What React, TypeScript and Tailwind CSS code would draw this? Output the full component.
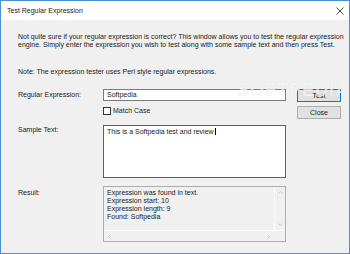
import { useState } from 'react'

const font = "font-['Liberation_Sans',Arial,sans-serif]"

export default function App() {
  const [matchCase, setMatchCase] = useState(false)

  return (
    <div className={`relative flex h-[254px] w-[350px] flex-col border border-[#4a8fd0] bg-[#f0f0f0] text-[7px] leading-[8px] text-[#1a1a1a] ${font}`}>
      {/* title bar */}
      <div className="flex h-[19px] shrink-0 items-center justify-between bg-white pl-[6px] pr-[4px]">
        <span className="text-[7px]">Test Regular Expression</span>
        <svg width="8" height="8" viewBox="0 0 8 8" className="mr-[1px]">
          <path d="M0.5 0.5 L7.5 7.5 M7.5 0.5 L0.5 7.5" stroke="#333" strokeWidth="0.9" />
        </svg>
      </div>

      <div className="flex flex-1 flex-col pl-[17px] pt-[13px]">
        <p className="whitespace-nowrap">
          Not quite sure if your regular expression is correct? This window allows you to test the regular expression
          <br />
          engine. Simply enter the expression you wish to test along with some sample text and then press Test.
        </p>
        <p className="mt-[19px] whitespace-nowrap">Note: The expression tester uses Perl style regular expressions.</p>

        <div className="mt-[13px] flex">
          <div className="flex w-[268px] flex-col">
            <div className="flex">
              <div className="w-[85px] pt-[2px]">Regular Expression:</div>
              <div className="flex h-[12px] w-[183px] items-center border border-[#7a7a7a] bg-white px-[3px]">Softpedia</div>
            </div>
            <label className="ml-[85px] mt-[6px] flex items-center gap-[2px]" onClick={() => setMatchCase(!matchCase)}>
              <span className="h-[8px] w-[8px] border border-[#333] bg-white" />
              <span>Match Case</span>
            </label>

            <div className="mt-[10px] flex">
              <div className="w-[85px] pt-[1px]">Sample Text:</div>
              <div className="h-[53px] w-[183px] border border-[#0078d7] bg-white px-[3px] pt-[2px]">
                This is a Softpedia test and review
                <span className="ml-[1px] inline-block h-[7px] w-px bg-black align-[-1px]" />
              </div>
            </div>

            <div className="mt-[8px] flex">
              <div className="w-[85px] pt-[3px]">Result:</div>
              <div className="flex h-[56px] w-[183px] flex-col border border-[#adadad] bg-[#f0f0f0]">
                <div className="flex flex-1">
                  <div className="flex-1 px-[3px] pt-[2px]">
                    <div>Expression was found in text.</div>
                    <div>Expression start: 10</div>
                    <div>Expression length: 9</div>
                    <div>Found: Softpedia</div>
                  </div>
                  <div className="flex w-[11px] flex-col items-center justify-between border-l border-white py-[4px] text-[#bdbdbd]">
                    <svg width="5" height="3" viewBox="0 0 5 3"><path d="M0.5 2.5 L2.5 0.5 L4.5 2.5" stroke="currentColor" fill="none" strokeWidth="0.8" /></svg>
                    <svg width="5" height="3" viewBox="0 0 5 3"><path d="M0.5 0.5 L2.5 2.5 L4.5 0.5" stroke="currentColor" fill="none" strokeWidth="0.8" /></svg>
                  </div>
                </div>
                <div className="flex h-[11px] border-t border-white text-[#bdbdbd]">
                  <div className="flex flex-1 items-center justify-between px-[4px]">
                    <svg width="3" height="5" viewBox="0 0 3 5"><path d="M2.5 0.5 L0.5 2.5 L2.5 4.5" stroke="currentColor" fill="none" strokeWidth="0.8" /></svg>
                    <svg width="3" height="5" viewBox="0 0 3 5"><path d="M0.5 0.5 L2.5 2.5 L0.5 4.5" stroke="currentColor" fill="none" strokeWidth="0.8" /></svg>
                  </div>
                  <div className="w-[11px]" />
                </div>
              </div>
            </div>
          </div>

          <div className="ml-[11px] flex flex-col gap-[4px]">
            <button className="flex h-[13px] w-[44px] items-center justify-center border border-[#0078d7] bg-[#e1e1e1] text-[7px]">Test</button>
            <button className="flex h-[13px] w-[44px] items-center justify-center border border-[#adadad] bg-[#e1e1e1] text-[7px]">Close</button>
          </div>
        </div>
      </div>

      {/* watermark */}
      <div className="pointer-events-none absolute left-[236px] top-[85px] text-[18px] font-bold tracking-[1px] text-white/70 [text-shadow:0_0_1px_rgba(0,0,0,0.1)]">
        SOFTPEDIA
      </div>
    </div>
  )
}
